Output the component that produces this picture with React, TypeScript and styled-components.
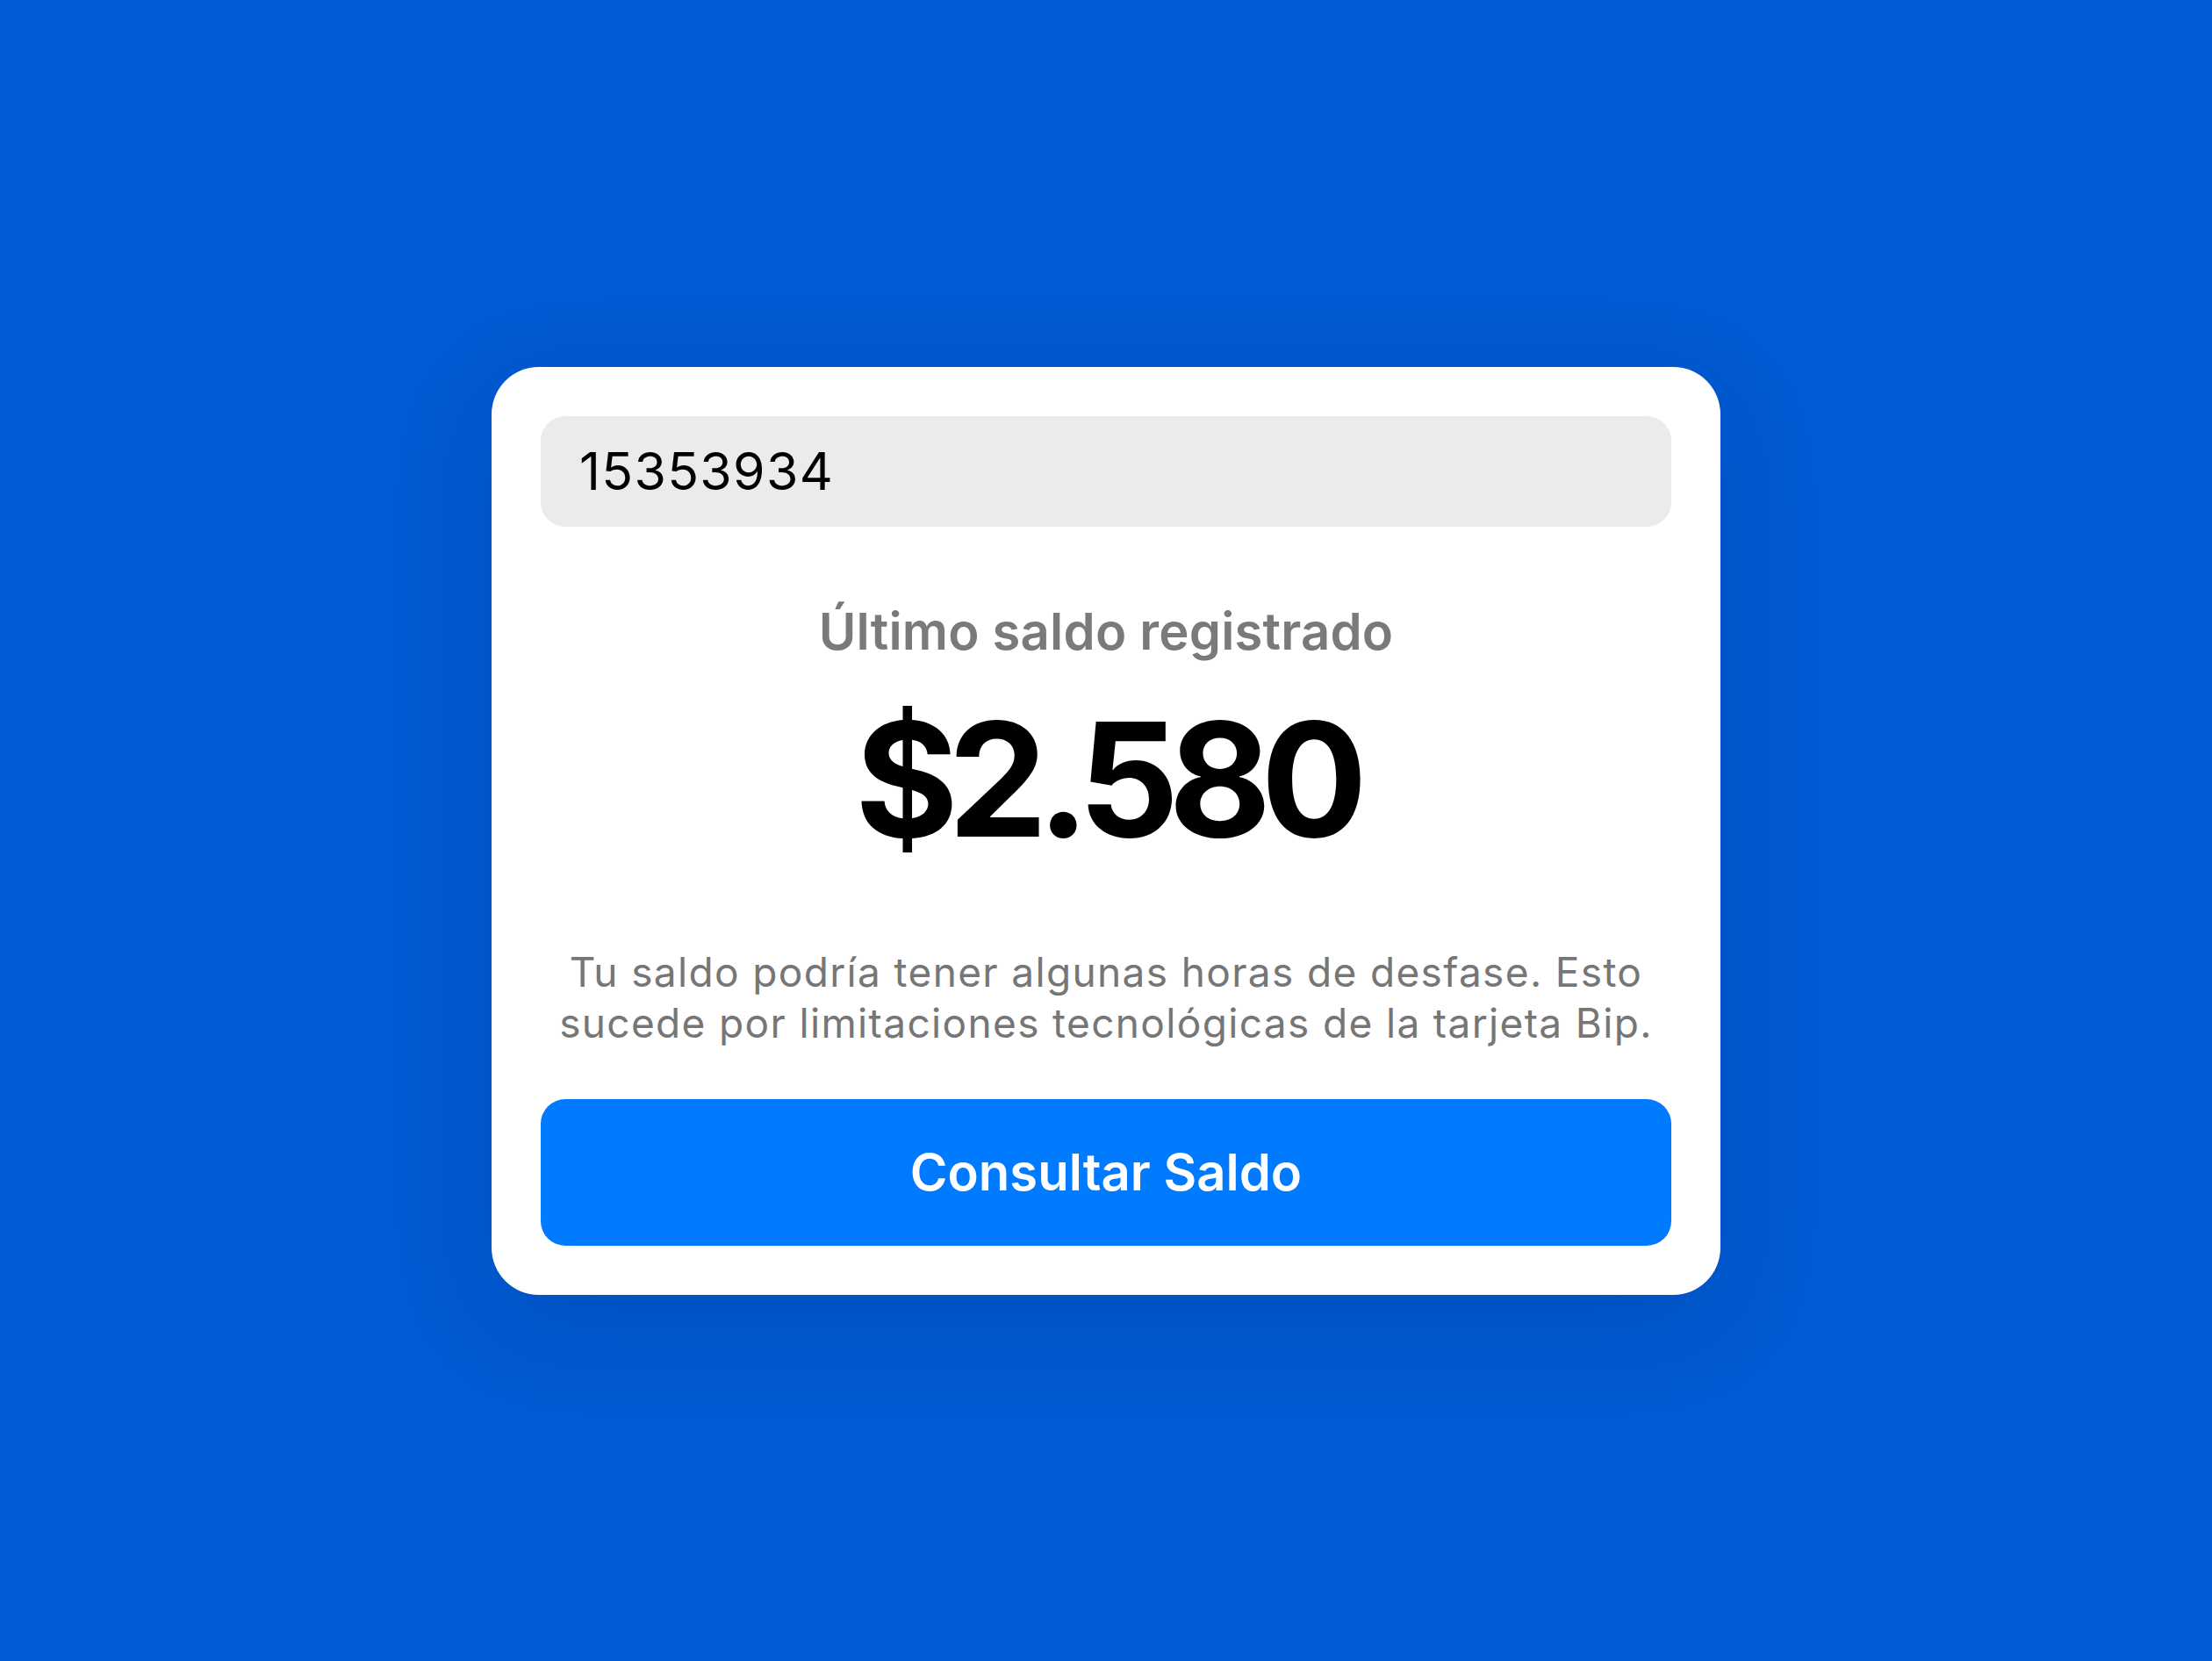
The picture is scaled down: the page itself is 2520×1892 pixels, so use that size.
import styled, { createGlobalStyle } from "styled-components";

const GlobalStyle = createGlobalStyle`
  html, body {
    margin: 0;
    padding: 0;
    background: #005bd4;
  }
  * { box-sizing: border-box; }
`;

const Page = styled.main`
  min-height: 100vh;
  display: flex;
  align-items: center;
  justify-content: center;
  background: #005bd4;
  font-family: Inter, "Noto Sans", sans-serif;
`;

const Card = styled.section`
  width: 1400px;
  padding: 56px;
  background: #ffffff;
  border-radius: 54px;
  box-shadow: 0 30px 120px rgba(0, 20, 70, 0.16);
  display: flex;
  flex-direction: column;
  align-items: stretch;
`;

const CardInput = styled.input`
  height: 126px;
  border: none;
  outline: none;
  border-radius: 28px;
  background: #ebebeb;
  padding: 0 44px;
  font-family: Inter, sans-serif;
  font-size: 59px;
  font-weight: 400;
  letter-spacing: 1.3px;
  color: #000;
`;

const Label = styled.h2`
  margin: 84px 0 0;
  text-align: center;
  font-size: 58px;
  line-height: 70px;
  font-weight: 600;
  color: #7a7a7a;
  letter-spacing: 0.2px;
`;

const Amount = styled.div`
  margin-top: 44px;
  text-align: center;
  font-size: 180px;
  line-height: 180px;
  font-weight: 700;
  color: #000;
  letter-spacing: -12px;
`;

const Note = styled.p`
  margin: 100px 0 0;
  text-align: center;
  font-size: 46px;
  line-height: 58px;
  font-weight: 400;
  letter-spacing: 1.35px;
  color: #767676;
`;

const Button = styled.button`
  margin-top: 58px;
  height: 167px;
  border: none;
  border-radius: 28px;
  background: #007aff;
  color: #fff;
  font-family: Inter, sans-serif;
  font-size: 58px;
  font-weight: 600;
  cursor: pointer;
`;

export default function App() {
  return (
    <>
      <GlobalStyle />
      <Page>
        <Card>
          <CardInput defaultValue="15353934" />
          <Label>Último saldo registrado</Label>
          <Amount>$2.580</Amount>
          <Note>
            Tu saldo podría tener algunas horas de desfase. Esto
            <br />
            sucede por limitaciones tecnológicas de la tarjeta Bip.
          </Note>
          <Button>Consultar Saldo</Button>
        </Card>
      </Page>
    </>
  );
}
